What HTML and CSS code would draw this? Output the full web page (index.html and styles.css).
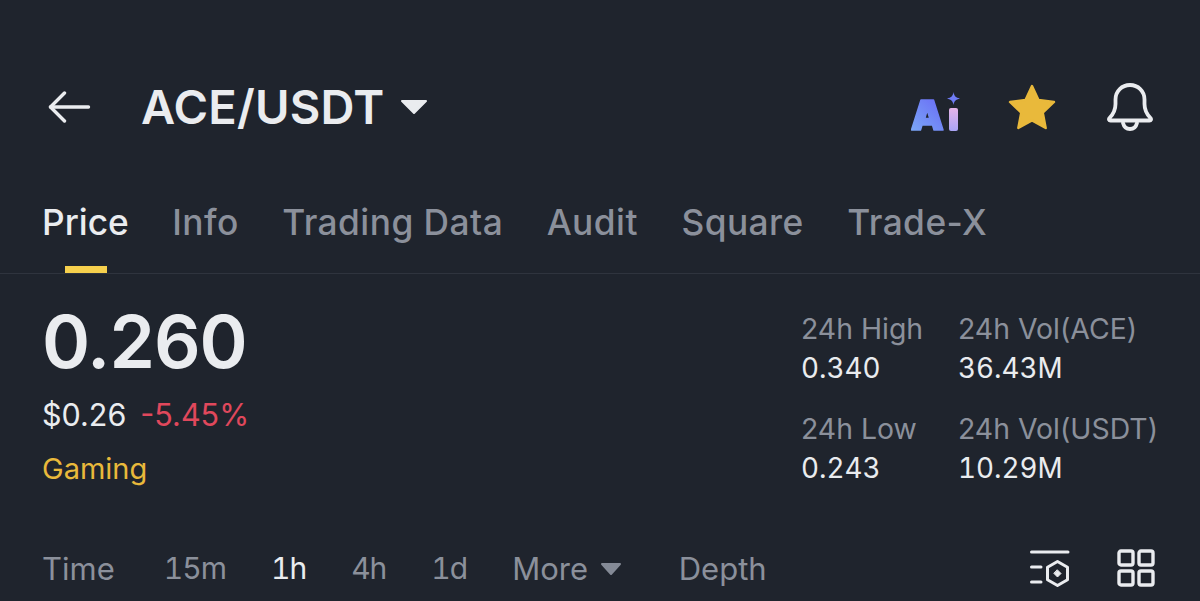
FILE: index.html
```html
<!DOCTYPE html>
<html>
<head>
    <title>ACE/USDT</title>
    <link rel="stylesheet" href="styles.css">
</head>
<body>
    <div class="screen">
        <!-- Top bar -->
        <div class="topbar">
            <svg class="back-icon" viewBox="0 0 44 32" fill="none" stroke="#eaecef" stroke-width="3.4" stroke-linecap="round" stroke-linejoin="round">
                <path d="M2.500 16H40.500"/>
                <path d="M16.500 2L2.500 16L16.500 30"/>
            </svg>
            <span class="pair">ACE/USDT</span>
            <svg class="caret-big" viewBox="0 0 28 16" fill="#eaecef" stroke="#eaecef" stroke-width="2" stroke-linejoin="round">
                <path d="M2 2H26L14 14Z"/>
            </svg>
            <div class="top-icons">
                <svg class="ai-icon" viewBox="0 0 50 44">
                    <defs>
                        <linearGradient id="ai-a" x1="0" y1="1" x2="1" y2="0">
                            <stop offset="0" stop-color="#7aa6f7"/>
                            <stop offset="1" stop-color="#6a6cf5"/>
                        </linearGradient>
                        <linearGradient id="ai-i" x1="0" y1="0" x2="0" y2="1">
                            <stop offset="0" stop-color="#e6b4e8"/>
                            <stop offset="1" stop-color="#a9a4f5"/>
                        </linearGradient>
                    </defs>
                    <path fill="url(#ai-a)" stroke="url(#ai-a)" stroke-width="1.500" stroke-linejoin="round" fill-rule="evenodd" d="M10 12H22.500L32 42H23L21.500 37H11L9.500 42H0.500ZM16.200 22L13.800 30.500H18.800Z"/>
                    <rect x="38" y="20" width="9" height="23" rx="2" fill="url(#ai-i)"/>
                    <path fill="#6f7cf6" d="M42.500 4C43.200 8 44.500 9.500 49 10.500C44.500 11.500 43.200 13 42.500 17C41.800 13 40.500 11.500 36 10.500C40.500 9.500 41.800 8 42.500 4Z"/>
                </svg>
                <svg class="star-icon" viewBox="0 0 48 46">
                    <path fill="#e9b93b" stroke="#e9b93b" stroke-width="2.400" stroke-linejoin="round" d="M24 2L30.500 16L46 18L34.800 28.600L37.700 44L24 36.500L10.300 44L13.200 28.600L2 18L17.500 16Z"/>
                </svg>
                <svg class="bell-icon" viewBox="0 0 46 48" fill="none" stroke="#eaecef" stroke-width="3.800" stroke-linecap="round" stroke-linejoin="round">
                    <path d="M2.500 35C6.500 31 8.500 27 8.500 21V16.500C8.500 8 15 2 23 2C31 2 37.500 8 37.500 16.500V21C37.500 27 39.500 31 43.500 35C44.500 36.200 44 37.500 42.500 37.500H3.500C2 37.500 1.500 36.200 2.500 35Z"/>
                    <path d="M16 40C17 44 19.500 46 23 46C26.500 46 29 44 30 40"/>
                </svg>
            </div>
        </div>

        <!-- Tabs -->
        <div class="tabs">
            <div class="tab active">Price</div>
            <div class="tab">Info</div>
            <div class="tab">Trading Data</div>
            <div class="tab">Audit</div>
            <div class="tab">Square</div>
            <div class="tab">Trade-X</div>
        </div>

        <!-- Price block -->
        <div class="summary">
            <div class="price-col">
                <div class="price">0.260</div>
                <div class="price-sub">
                    <span class="usd">$0.26</span>
                    <span class="change">-5.45%</span>
                </div>
                <div class="tag">Gaming</div>
            </div>
            <div class="stats">
                <div class="stat">
                    <div class="stat-label">24h High</div>
                    <div class="stat-value">0.340</div>
                </div>
                <div class="stat">
                    <div class="stat-label">24h Vol(ACE)</div>
                    <div class="stat-value">36.43M</div>
                </div>
                <div class="stat">
                    <div class="stat-label">24h Low</div>
                    <div class="stat-value">0.243</div>
                </div>
                <div class="stat">
                    <div class="stat-label">24h Vol(USDT)</div>
                    <div class="stat-value">10.29M</div>
                </div>
            </div>
        </div>

        <!-- Chart intervals -->
        <div class="intervals">
            <span class="interval time">Time</span>
            <span class="interval num">15m</span>
            <span class="interval num active">1h</span>
            <span class="interval num">4h</span>
            <span class="interval num">1d</span>
            <span class="interval more">More
                <svg class="caret-small" viewBox="0 0 22 14" fill="#848a96" stroke="#848a96" stroke-width="2" stroke-linejoin="round">
                    <path d="M2 2H20L11 12Z"/>
                </svg>
            </span>
            <span class="interval depth">Depth</span>
            <div class="chart-icons">
                <svg class="settings-icon" viewBox="0 0 40 40" fill="none" stroke="#eaecef" stroke-width="3" stroke-linecap="round" stroke-linejoin="round">
                    <path d="M1.500 4H38"/>
                    <path d="M1.500 19H11"/>
                    <path d="M1.500 34H11"/>
                    <path d="M27.500 13.500L37.500 19.200V31.800L27.500 37.500L17.500 31.800V19.200Z"/>
                    <path d="M27.500 22L31 25.500L27.500 29L24 25.500Z" fill="#eaecef" stroke-width="1"/>
                </svg>
                <svg class="grid-icon" viewBox="0 0 38 38" fill="none" stroke="#eaecef" stroke-width="3.400" stroke-linejoin="round">
                    <rect x="2" y="2" width="14" height="14" rx="2"/>
                    <rect x="22" y="2" width="14" height="14" rx="2"/>
                    <rect x="2" y="22" width="14" height="14" rx="2"/>
                    <rect x="22" y="22" width="14" height="14" rx="2"/>
                </svg>
            </div>
        </div>
    </div>
</body>
</html>
```

FILE: styles.css
```css
* {
    box-sizing: border-box;
}

html, body {
    margin: 0;
    height: 100%;
    overflow: hidden;
}

body {
    background-color: #1f242d;
    color: #eaecef;
    font-family: Inter, "Noto Sans", sans-serif;
}

.screen {
    height: 601px;
    display: flex;
    flex-direction: column;
}

/* Top bar */
.topbar {
    display: flex;
    align-items: center;
    height: 54px;
    margin-top: 80px;
    padding: 0 47px 0 48px;
}

.back-icon {
    width: 44px;
    height: 32px;
    margin-right: 49px;
}

.pair {
    font-size: 47px;
    font-weight: 600;
    letter-spacing: 0.2px;
    line-height: 54px;
}

.caret-big {
    width: 28px;
    height: 16px;
    margin-left: 15px;
}

.top-icons {
    display: flex;
    align-items: center;
    margin-left: auto;
}

.ai-icon {
    width: 50px;
    height: 44px;
    margin-top: 6px;
}

.star-icon {
    width: 48px;
    height: 46px;
    margin-left: 47px;
}

.bell-icon {
    width: 46px;
    height: 48px;
    margin-left: 51px;
}

/* Tabs */
.tabs {
    display: flex;
    gap: 43.500px;
    height: 140px;
    padding: 64px 0 0 42px;
    border-bottom: 1px solid #2f343e;
}

.tab {
    position: relative;
    font-size: 35.300px;
    font-weight: 500;
    letter-spacing: 0.450px;
    line-height: 50px;
    color: #8b909b;
}

.tab.active {
    letter-spacing: 0;
    color: #eaecef;
}

.tab.active::after {
    content: "";
    position: absolute;
    left: 23px;
    bottom: 0;
    width: 42px;
    height: 7px;
    background-color: #f6d04d;
}

/* Price block */
.summary {
    display: flex;
    justify-content: space-between;
    padding: 28px 42px 0 42px;
}

.price {
    font-size: 73px;
    font-weight: 600;
    line-height: 80px;
    letter-spacing: -1px;
}

.price-sub {
    display: flex;
    gap: 14px;
    margin-top: 13px;
    font-size: 30.500px;
    line-height: 40px;
}

.change {
    color: #e0485c;
}

.tag {
    margin-top: 16px;
    font-size: 29px;
    line-height: 36px;
    color: #e9b93b;
}

.stats {
    display: grid;
    grid-template-columns: 157px auto;
    row-gap: 22px;
    padding-top: 7px;
}

.stat-label {
    font-size: 28.400px;
    line-height: 40px;
    color: #8b909b;
}

.stat-value {
    font-size: 27.800px;
    font-variant-numeric: tabular-nums;
    line-height: 38px;
}

/* Chart intervals */
.intervals {
    display: flex;
    align-items: center;
    height: 60px;
    margin-top: auto;
    margin-bottom: 3px;
    padding: 0 45px 0 42px;
    font-size: 31px;
    color: #8b909b;
}

.interval {
    margin-right: 45px;
}

.interval.num {
    font-size: 30px;
    font-variant-numeric: tabular-nums;
    letter-spacing: -1px;
}

.interval.time {
    margin-right: 49px;
}

.interval.active {
    color: #eaecef;
}

.interval.more {
    margin-right: 57px;
}

.interval.depth {
    margin-right: 0;
}

.caret-small {
    width: 22px;
    height: 14px;
    margin-left: 3px;
    vertical-align: 4px;
}

.chart-icons {
    display: flex;
    align-items: center;
    gap: 47px;
    margin-left: auto;
}

.settings-icon {
    width: 40px;
    height: 40px;
}

.grid-icon {
    width: 38px;
    height: 38px;
}
```
